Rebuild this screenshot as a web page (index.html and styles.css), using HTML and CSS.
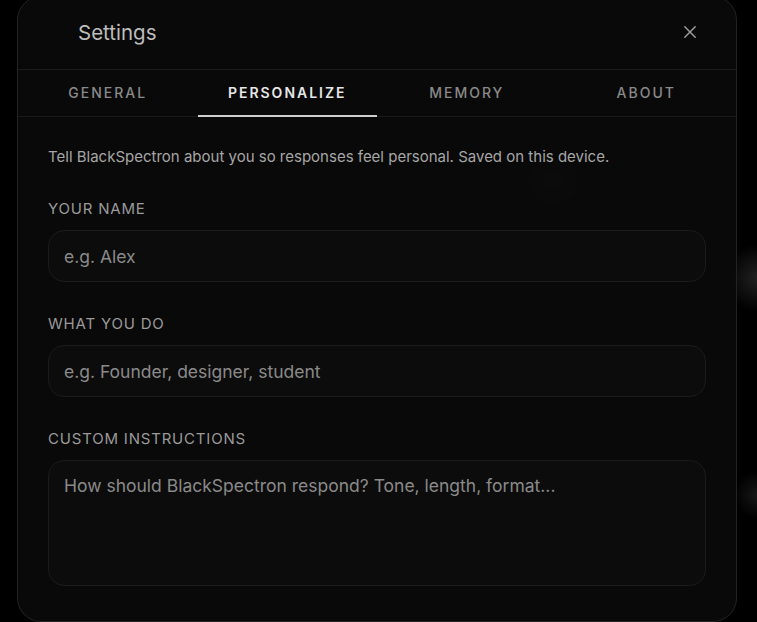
FILE: index.html
```html
<!DOCTYPE html>
<html lang="en">
<head>
<meta charset="utf-8">
<title>Settings</title>
<link rel="stylesheet" href="styles.css">
</head>
<body>
<div class="modal">
  <div class="header">
    <h1 class="title">Settings</h1>
    <button class="close" aria-label="Close">
      <svg width="12" height="12" viewBox="0 0 12 12"><path d="M0.8 0.8 L11.2 11.2 M11.2 0.8 L0.8 11.2" stroke="currentColor" stroke-width="1.5" stroke-linecap="round" fill="none"/></svg>
    </button>
  </div>
  <nav class="tabs">
    <div class="tab">GENERAL</div>
    <div class="tab active">PERSONALIZE</div>
    <div class="tab">MEMORY</div>
    <div class="tab">ABOUT</div>
  </nav>
  <div class="content">
    <p class="desc">Tell BlackSpectron about you so responses feel personal. Saved on this device.</p>
    <label class="label">YOUR NAME</label>
    <div class="input">e.g. Alex</div>
    <label class="label">WHAT YOU DO</label>
    <div class="input">e.g. Founder, designer, student</div>
    <label class="label">CUSTOM INSTRUCTIONS</label>
    <div class="input textarea">How should BlackSpectron respond? Tone, length, format...</div>
  </div>
</div>
</body>
</html>
```
FILE: styles.css
```css
* { box-sizing: border-box; }
html, body { margin: 0; height: 100%; }
body {
  background:
    radial-gradient(circle at 553px 180px, rgba(255,255,255,0.10) 0, rgba(255,255,255,0) 38px),
    radial-gradient(circle at 757px 278px, rgba(255,255,255,0.13) 0, rgba(255,255,255,0) 34px),
    radial-gradient(circle at 757px 495px, rgba(255,255,255,0.09) 0, rgba(255,255,255,0) 24px),
    radial-gradient(ellipse 280px 45px at 470px 280px, rgba(255,255,255,0.025) 0, rgba(255,255,255,0) 100%),
    #000;
  font-family: Inter, "Liberation Sans", sans-serif;
  overflow: hidden;
}
.modal {
  margin: -4px 0 0 17px;
  width: 720px;
  height: 626px;
  border: 1px solid #232323;
  border-radius: 24px;
  background: rgba(10,10,10,0.9);
  display: flex;
  flex-direction: column;
}
.header {
  height: 73px;
  flex: none;
  display: flex;
  align-items: center;
  justify-content: space-between;
  padding: 0 40px 2px 60px;
  border-bottom: 1px solid #1a1a1a;
}
.title {
  margin: 0;
  font-size: 20.5px;
  font-weight: 400;
  color: #bdbdbd;
}
.close {
  background: none;
  border: 0;
  padding: 0;
  color: #9c9c9c;
  display: flex;
  width: 12px;
  height: 12px;
}
.tabs {
  height: 47px;
  flex: none;
  display: grid;
  grid-template-columns: repeat(4, 1fr);
  border-bottom: 1px solid #1a1a1a;
}
.tab {
  display: flex;
  align-items: center;
  justify-content: center;
  font-size: 14px;
  font-weight: 500;
  letter-spacing: 2px;
  color: #8a8a8a;
  border-bottom: 2px solid transparent;
  margin-bottom: -1px;
}
.tab.active {
  color: #e6e6e6;
  font-weight: 600;
  border-bottom-color: #cfcfcf;
}
.content {
  padding: 30px 30px 0 30px;
  display: flex;
  flex-direction: column;
}
.desc {
  margin: 0;
  font-size: 15px;
  line-height: 20px;
  color: #a6a6a6;
}
.label {
  display: block;
  margin-top: 33px;
  font-size: 15px;
  line-height: 18px;
  letter-spacing: 0.8px;
  color: #9a9a9a;
}
.input {
  margin-top: 12px;
  height: 52px;
  border: 1px solid #1b1b1b;
  border-radius: 16px;
  background: #0c0c0c;
  padding: 0 15px;
  display: flex;
  align-items: center;
  font-size: 17.5px;
  color: #8a8a8a;
}
.textarea {
  height: 126px;
  align-items: flex-start;
  padding-top: 14px;
}
```
